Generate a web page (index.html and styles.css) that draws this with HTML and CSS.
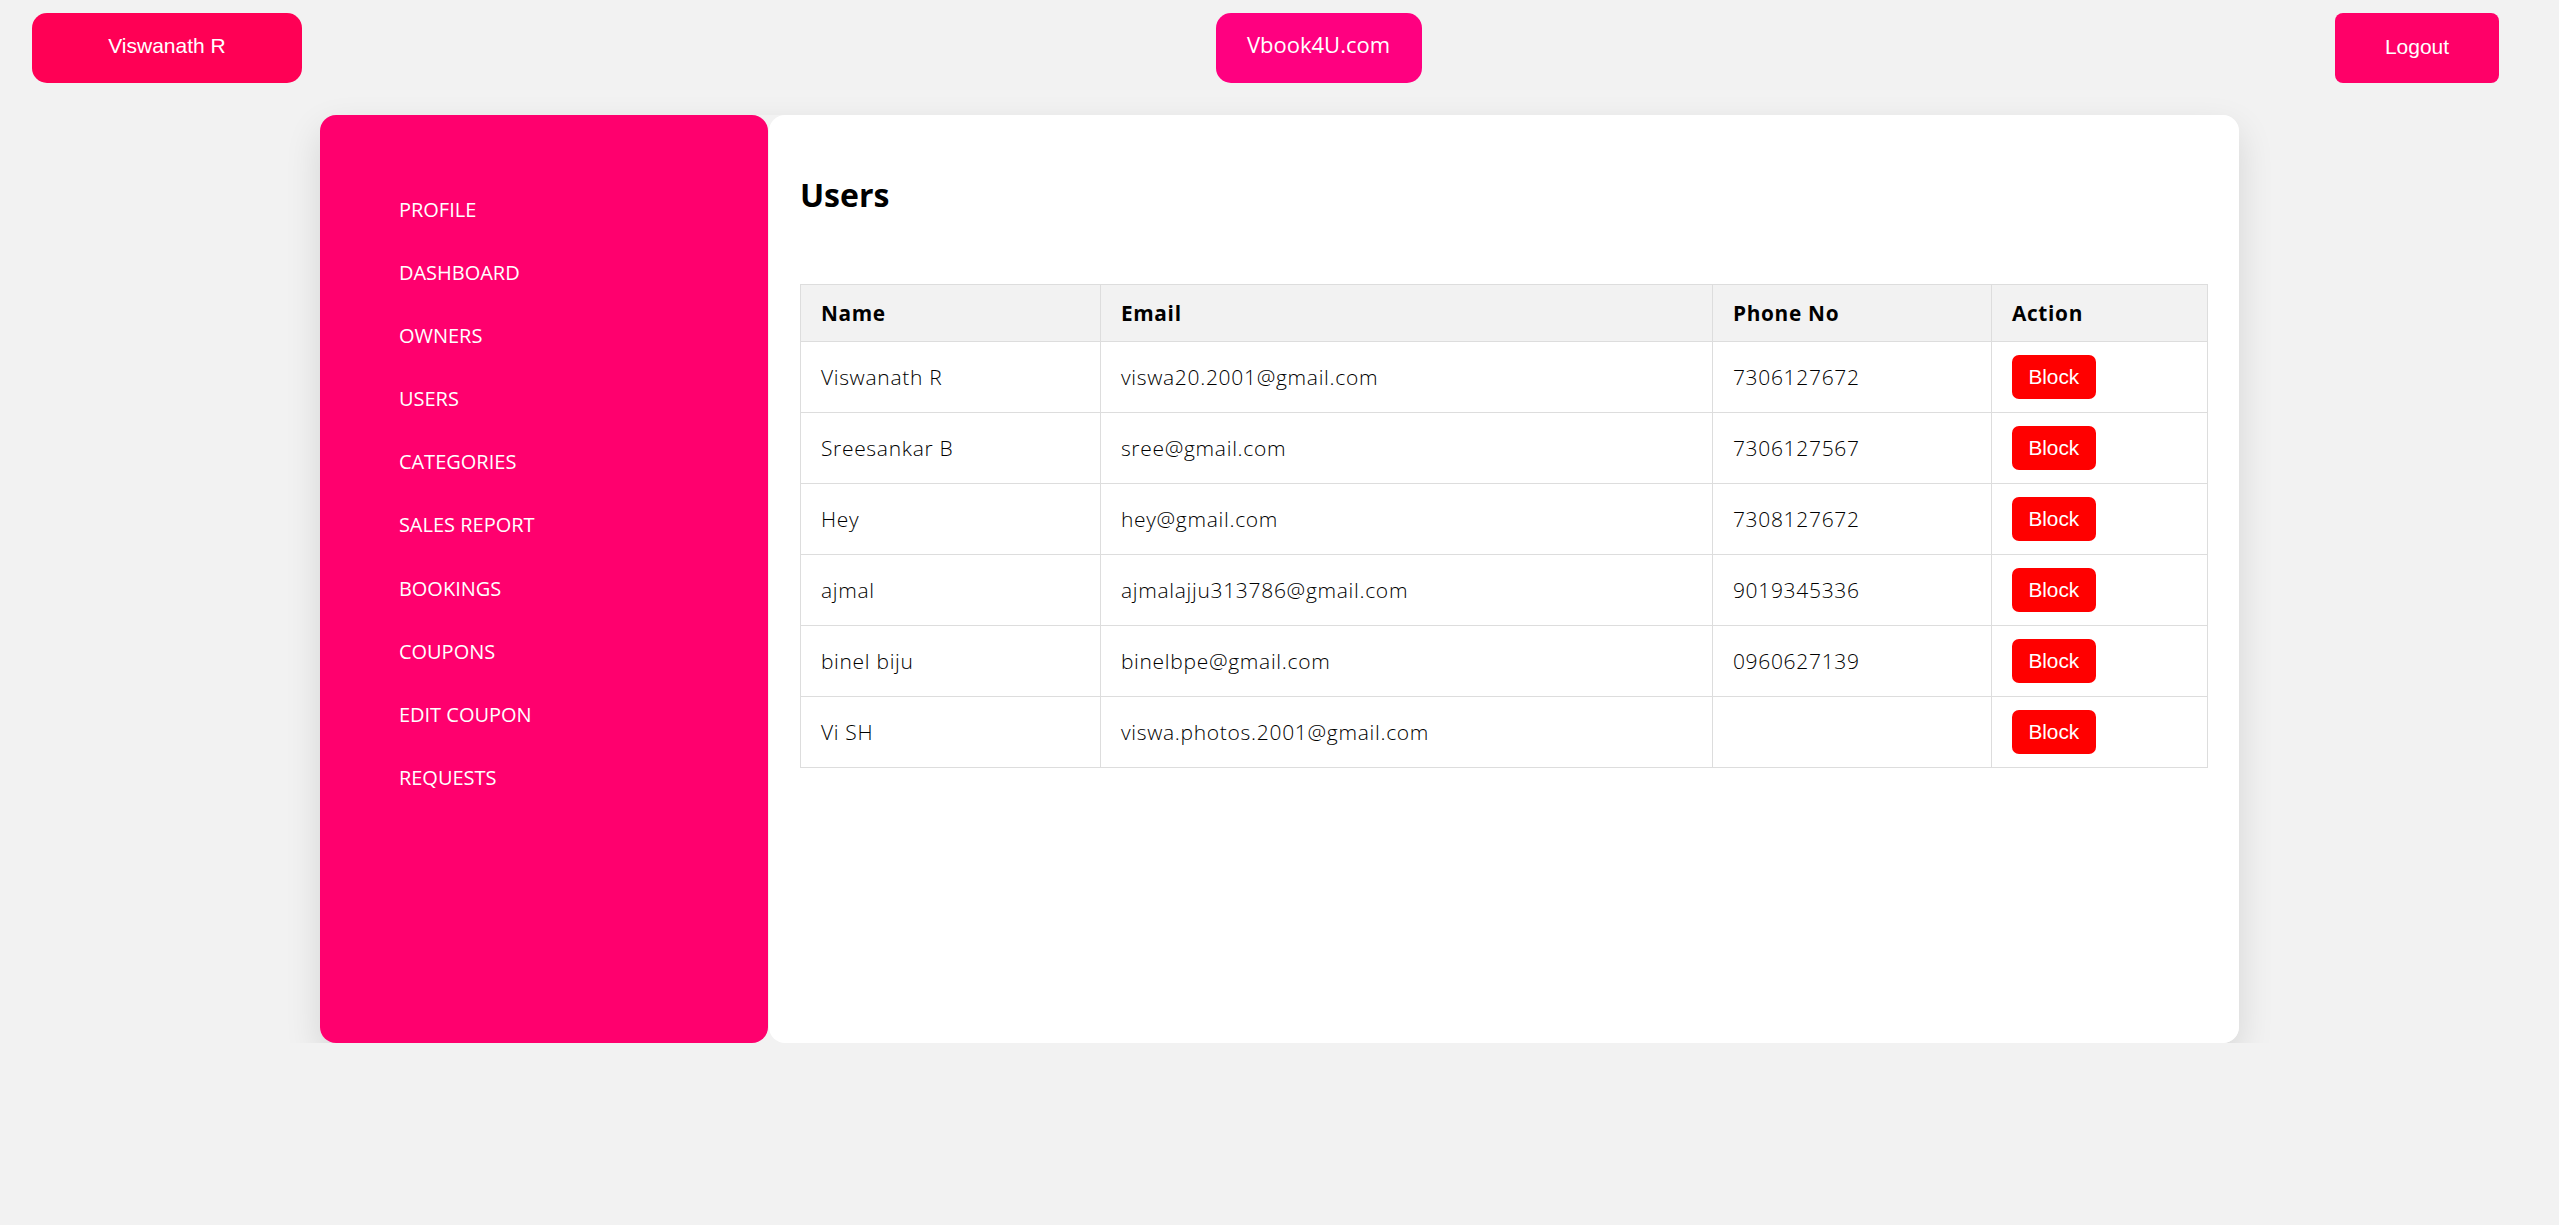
FILE: index.html
```html
<!DOCTYPE html>
<html lang="en">
<head>
<meta charset="utf-8">
<title>Vbook4U.com - Users</title>
<link rel="stylesheet" href="styles.css">
</head>
<body>
<header class="topbar">
  <button class="btn-user" type="button">Viswanath R</button>
  <a class="brand" href="#">Vbook4U.com</a>
  <button class="btn-logout" type="button">Logout</button>
</header>
<div class="layout">
  <aside class="sidebar">
    <ul class="menu">
      <li>PROFILE</li>
      <li>DASHBOARD</li>
      <li>OWNERS</li>
      <li>USERS</li>
      <li>CATEGORIES</li>
      <li>SALES REPORT</li>
      <li>BOOKINGS</li>
      <li>COUPONS</li>
      <li>EDIT COUPON</li>
      <li>REQUESTS</li>
    </ul>
  </aside>
  <main class="panel">
    <h2 class="title">Users</h2>
    <table class="users">
      <colgroup>
        <col class="c-name">
        <col class="c-email">
        <col class="c-phone">
        <col class="c-action">
      </colgroup>
      <thead>
        <tr><th>Name</th><th>Email</th><th>Phone No</th><th>Action</th></tr>
      </thead>
      <tbody>
        <tr><td>Viswanath R</td><td>viswa20.2001@gmail.com</td><td>7306127672</td><td><button class="block-btn" type="button">Block</button></td></tr>
        <tr><td>Sreesankar B</td><td>sree@gmail.com</td><td>7306127567</td><td><button class="block-btn" type="button">Block</button></td></tr>
        <tr><td>Hey</td><td>hey@gmail.com</td><td>7308127672</td><td><button class="block-btn" type="button">Block</button></td></tr>
        <tr><td>ajmal</td><td>ajmalajju313786@gmail.com</td><td>9019345336</td><td><button class="block-btn" type="button">Block</button></td></tr>
        <tr><td>binel biju</td><td>binelbpe@gmail.com</td><td>0960627139</td><td><button class="block-btn" type="button">Block</button></td></tr>
        <tr><td>Vi SH</td><td>viswa.photos.2001@gmail.com</td><td></td><td><button class="block-btn" type="button">Block</button></td></tr>
      </tbody>
    </table>
  </main>
</div>
</body>
</html>
```

FILE: styles.css
```css
html, body {
  margin: 0;
  padding: 0;
}

body {
  background: #f2f2f2;
  font-family: "Open Sans", "Noto Sans", sans-serif;
  color: #000;
}

.topbar {
  display: flex;
  justify-content: space-between;
  align-items: flex-start;
  padding: 13px 60px 0 32px;
}

.btn-user,
.btn-logout {
  height: 70px;
  border: 0;
  color: #fff;
  font-family: "Liberation Sans", Arial, sans-serif;
  font-size: 21px;
  padding: 0 0 4px;
  cursor: pointer;
}

.btn-user {
  width: 270px;
  background: #ff0055;
  border-radius: 15px;
}

.btn-logout {
  width: 164px;
  background: #ff0068;
  border-radius: 8px;
  padding-bottom: 3px;
}

.brand {
  box-sizing: border-box;
  width: 206px;
  height: 70px;
  display: flex;
  align-items: center;
  justify-content: center;
  padding-bottom: 8px;
  background: #ff0080;
  color: #fff;
  border-radius: 15px;
  font-size: 22px;
  text-decoration: none;
}

.layout {
  width: 75%;
  height: 928px;
  margin: 32px auto 0;
  display: flex;
  gap: 1px;
  border-radius: 16px;
  box-shadow: 0 14px 36px rgba(0, 0, 0, 0.12);
}

.sidebar {
  width: 448px;
  flex: none;
  background: #ff006e;
  border-radius: 16px;
}

.menu {
  list-style: none;
  margin: 0;
  padding: 63px 0 0 79px;
}

.menu li {
  height: 63.1px;
  line-height: 63.1px;
  color: #fff;
  font-size: 20px;
}

.panel {
  flex: 1;
  min-width: 0;
  background: #fff;
  border-radius: 16px;
  padding: 61px 32px 0 31px;
}

.title {
  margin: 0 0 70px;
  font-size: 32px;
  line-height: 38px;
  font-weight: 700;
}

.users {
  width: 100%;
  border-collapse: collapse;
  table-layout: fixed;
  letter-spacing: 0.7px;
  font-size: 21px;
}

.c-name { width: 300px; }
.c-email { width: 612px; }
.c-phone { width: 279px; }
.c-action { width: 216px; }

.users th,
.users td {
  border: 1px solid #dddddd;
  padding: 13px 20px;
  text-align: left;
  line-height: 30px;
  vertical-align: middle;
}

.users th {
  background: #f2f2f2;
  font-weight: 700;
  font-size: 20.8px;
}

.users td {
  font-weight: 300;
  color: #000;
}

.block-btn {
  display: block;
  height: 44px;
  padding: 0 16.5px 1px;
  border: 0;
  border-radius: 7px;
  background: #ff0000;
  color: #fff;
  font-family: "Liberation Sans", Arial, sans-serif;
  font-size: 20.8px;
  letter-spacing: normal;
  line-height: 24px;
  cursor: pointer;
}
```
